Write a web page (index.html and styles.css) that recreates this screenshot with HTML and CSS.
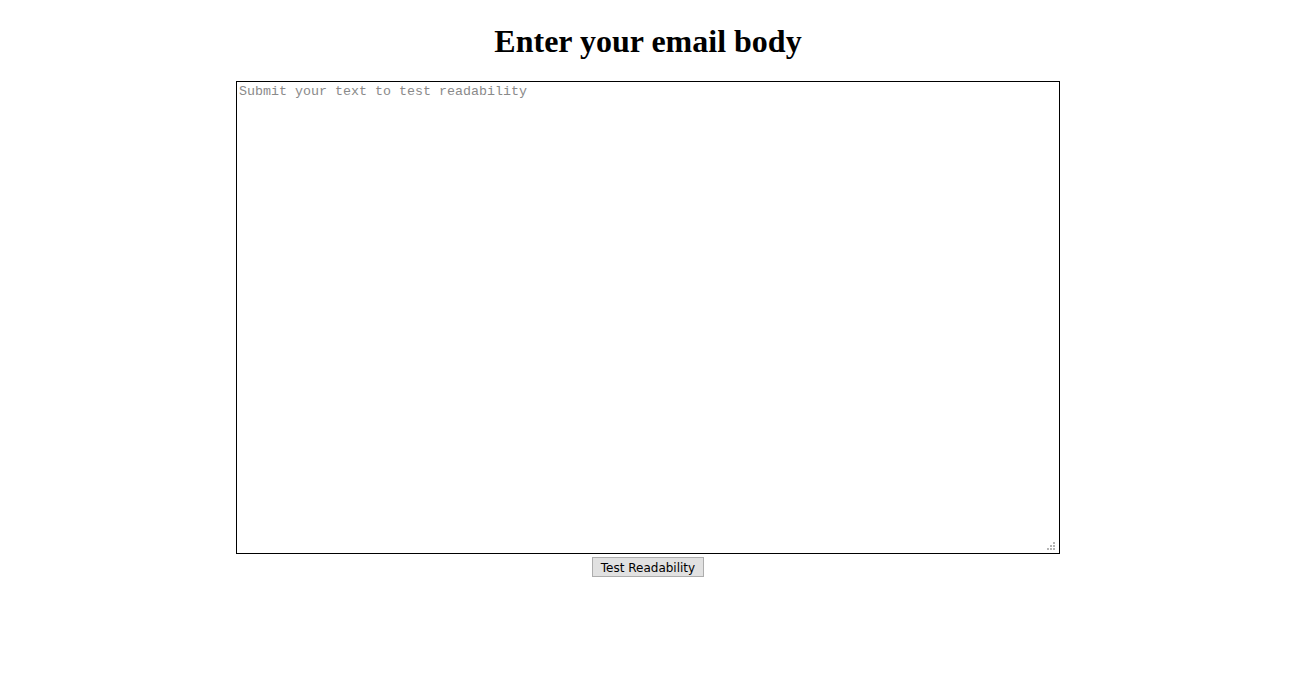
FILE: index.html
```html
<!DOCTYPE html>
<html>
<head>
<meta charset="utf-8">
<link rel="stylesheet" href="styles.css">
</head>
<body>
<main class="page">
  <h1 class="title">Enter your email body</h1>
  <form class="form">
    <div class="field">
      <textarea class="body-input" placeholder="Submit your text to test readability"></textarea>
      <span class="grip" aria-hidden="true">
        <i></i><i></i><i></i><i></i><i></i><i></i>
      </span>
    </div>
    <button type="button" class="submit">Test Readability</button>
  </form>
</main>
</body>
</html>
```
FILE: styles.css
```css
html, body {
  margin: 0;
  padding: 0;
  background: #fff;
}
body {
  padding: 0 8px;
}
.page {
  width: 1280px;
  display: flex;
  flex-direction: column;
  align-items: center;
}
.title {
  font-family: "Liberation Serif", serif;
  font-size: 32px;
  font-weight: bold;
  line-height: 37px;
  margin: 23px 0 21px;
  color: #000;
}
.form {
  display: flex;
  flex-direction: column;
  align-items: center;
  gap: 3px;
}
.field {
  position: relative;
  width: 824px;
  height: 473px;
}
.body-input {
  box-sizing: border-box;
  width: 100%;
  height: 100%;
  margin: 0;
  padding: 2px;
  border: 1px solid #000;
  font-family: "Liberation Mono", monospace;
  font-size: 13.333px;
  line-height: 15px;
  resize: none;
  outline: none;
  display: block;
}
.body-input::placeholder {
  color: #8a8a8a;
}
.grip {
  position: absolute;
  right: 5px;
  bottom: 4px;
  width: 8px;
  height: 8px;
}
.grip i {
  position: absolute;
  width: 2px;
  height: 2px;
  background: #b4b4b4;
}
.grip i:nth-child(1) { right: 0; bottom: 6px; }
.grip i:nth-child(2) { right: 0; bottom: 3px; }
.grip i:nth-child(3) { right: 3px; bottom: 3px; }
.grip i:nth-child(4) { right: 0; bottom: 0; }
.grip i:nth-child(5) { right: 3px; bottom: 0; }
.grip i:nth-child(6) { right: 6px; bottom: 0; }
.submit {
  box-sizing: border-box;
  width: 112px;
  height: 20px;
  margin: 0;
  padding: 2px 0 0;
  background: #e1e1e1;
  border: 1px solid #adadad;
  font-family: "DejaVu Sans", sans-serif;
  font-size: 12px;
  color: #000;
  line-height: 16px;
}
```
